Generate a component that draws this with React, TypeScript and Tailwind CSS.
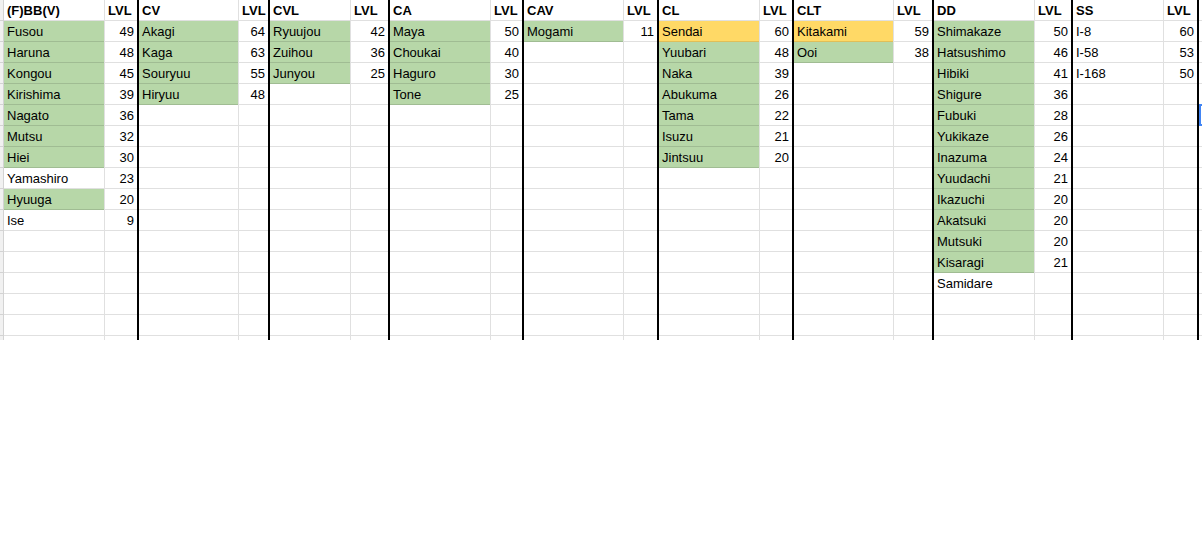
type Fill = "g" | "y" | "";

interface Group {
  title: string;
  nameW: string;
  lvlW: string;
  rows: [string, string, Fill][];
}

const groups: Group[] = [
  {
    title: "(F)BB(V)",
    nameW: "w-[101px]",
    lvlW: "w-[34px]",
    rows: [
      ["Fusou", "49", "g"],
      ["Haruna", "48", "g"],
      ["Kongou", "45", "g"],
      ["Kirishima", "39", "g"],
      ["Nagato", "36", "g"],
      ["Mutsu", "32", "g"],
      ["Hiei", "30", "g"],
      ["Yamashiro", "23", ""],
      ["Hyuuga", "20", "g"],
      ["Ise", "9", ""],
    ],
  },
  {
    title: "CV",
    nameW: "w-[100px]",
    lvlW: "w-[31px]",
    rows: [
      ["Akagi", "64", "g"],
      ["Kaga", "63", "g"],
      ["Souryuu", "55", "g"],
      ["Hiryuu", "48", "g"],
    ],
  },
  {
    title: "CVL",
    nameW: "w-[81px]",
    lvlW: "w-[39px]",
    rows: [
      ["Ryuujou", "42", "g"],
      ["Zuihou", "36", "g"],
      ["Junyou", "25", "g"],
    ],
  },
  {
    title: "CA",
    nameW: "w-[101px]",
    lvlW: "w-[33px]",
    rows: [
      ["Maya", "50", "g"],
      ["Choukai", "40", "g"],
      ["Haguro", "30", "g"],
      ["Tone", "25", "g"],
    ],
  },
  {
    title: "CAV",
    nameW: "w-[100px]",
    lvlW: "w-[35px]",
    rows: [["Mogami", "11", "g"]],
  },
  {
    title: "CL",
    nameW: "w-[101px]",
    lvlW: "w-[34px]",
    rows: [
      ["Sendai", "60", "y"],
      ["Yuubari", "48", "g"],
      ["Naka", "39", "g"],
      ["Abukuma", "26", "g"],
      ["Tama", "22", "g"],
      ["Isuzu", "21", "g"],
      ["Jintsuu", "20", "g"],
    ],
  },
  {
    title: "CLT",
    nameW: "w-[100px]",
    lvlW: "w-[40px]",
    rows: [
      ["Kitakami", "59", "y"],
      ["Ooi", "38", "g"],
    ],
  },
  {
    title: "DD",
    nameW: "w-[101px]",
    lvlW: "w-[38px]",
    rows: [
      ["Shimakaze", "50", "g"],
      ["Hatsushimo", "46", "g"],
      ["Hibiki", "41", "g"],
      ["Shigure", "36", "g"],
      ["Fubuki", "28", "g"],
      ["Yukikaze", "26", "g"],
      ["Inazuma", "24", "g"],
      ["Yuudachi", "21", "g"],
      ["Ikazuchi", "20", "g"],
      ["Akatsuki", "20", "g"],
      ["Mutsuki", "20", "g"],
      ["Kisaragi", "21", "g"],
      ["Samidare", "", ""],
    ],
  },
  {
    title: "SS",
    nameW: "w-[91px]",
    lvlW: "w-[35px]",
    rows: [
      ["I-8", "60", ""],
      ["I-58", "53", ""],
      ["I-168", "50", ""],
    ],
  },
];

// header + 15 rows, plus one more that gets clipped at the bottom
const ROWS = 16;

const cell =
  "h-[21px] shrink-0 border-b border-[#0000001f] px-[3px] pt-px leading-[20px] whitespace-nowrap overflow-hidden";

function fillClass(f: Fill) {
  if (f === "g") return "bg-[#b7d7a8]";
  if (f === "y") return "bg-[#ffd966]";
  return "";
}

function GroupColumns({ group }: { group: Group }) {
  const blanks = Array.from({ length: ROWS - group.rows.length });
  return (
    <>
      <div className={`${group.nameW} shrink-0 flex flex-col border-r border-[#0000001f]`}>
        <div className={`${cell} font-bold`}>{group.title}</div>
        {group.rows.map(([name, , fill]) => (
          <div key={name} className={`${cell} ${fillClass(fill)}`}>
            {name}
          </div>
        ))}
        {blanks.map((_, i) => (
          <div key={i} className={cell} />
        ))}
      </div>
      <div className={`${group.lvlW} shrink-0 flex flex-col border-r-2 border-black`}>
        <div className={`${cell} font-bold`}>LVL</div>
        {group.rows.map(([name, lvl]) => (
          <div key={name} className={`${cell} text-right`}>
            {lvl}
          </div>
        ))}
        {blanks.map((_, i) => (
          <div key={i} className={cell} />
        ))}
      </div>
    </>
  );
}

export default function App() {
  const rowIdx = Array.from({ length: ROWS + 1 });

  return (
    <div className="h-[540px] w-[1202px] overflow-hidden bg-white font-['Liberation_Sans',Arial,sans-serif] text-[13px] text-black">
      <div className="flex h-[340px] overflow-hidden">
        {/* edge of the row header */}
        <div className="w-[4px] shrink-0 flex flex-col border-r border-[#0000001f] bg-[#f1f1f1]">
          {rowIdx.map((_, i) => (
            <div key={i} className="h-[21px] shrink-0 border-b border-[#0000001f]" />
          ))}
        </div>

        {groups.map((g) => (
          <GroupColumns key={g.title} group={g} />
        ))}

        {/* next column, with the active cell's edge showing */}
        <div className="w-[3px] shrink-0 flex flex-col">
          {rowIdx.map((_, i) =>
            i === 5 ? (
              <div
                key={i}
                className="-mt-px h-[22px] shrink-0 border-y-2 border-l-2 border-[#4285f4]"
              />
            ) : (
              <div key={i} className="h-[21px] shrink-0 border-b border-[#0000001f]" />
            )
          )}
        </div>
      </div>
    </div>
  );
}
